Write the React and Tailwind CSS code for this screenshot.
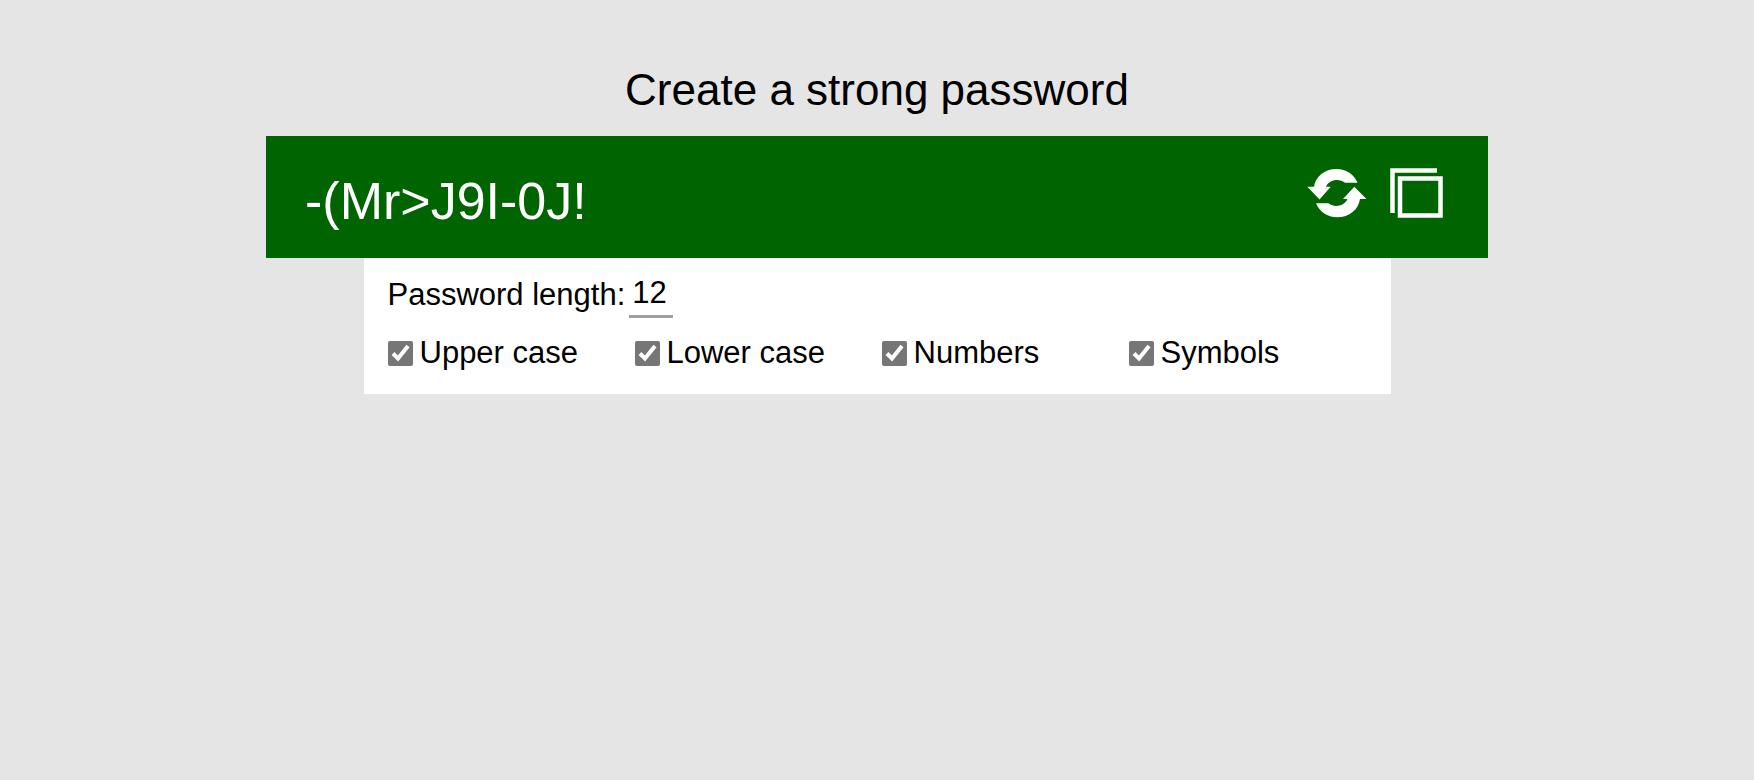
import { useState } from "react";

const OPTIONS = [
  { id: "upper", label: "Upper case" },
  { id: "lower", label: "Lower case" },
  { id: "numbers", label: "Numbers" },
  { id: "symbols", label: "Symbols" },
];

const SETS = {
  upper: "ABCDEFGHIJKLMNOPQRSTUVWXYZ",
  lower: "abcdefghijklmnopqrstuvwxyz",
  numbers: "0123456789",
  symbols: "!@#$%^&*()-_=+<>?",
};

function RefreshIcon() {
  return (
    <svg viewBox="0 0 60 50" className="h-[50px] w-[60px]" fill="currentColor" aria-hidden="true">
      <path d="M0.3 18.800H7C8.500 8.500 17.500 1 29.500 1C39.500 1 47 6.500 50.500 14.700H38C32 10 22 11.500 19 18.800H23.700L12.500 31.500Z" />
      <path d="M59.500 31H53C51.500 41.500 42.500 49.300 30 49.300C20.500 49.300 12.500 43.800 9 35.300H21.500C27.500 40 37 38.500 40.500 31H36L47.300 18.800Z" />
    </svg>
  );
}

function CopyIcon() {
  return (
    <svg viewBox="0 0 53 50" className="h-[50px] w-[53px]" fill="none" stroke="currentColor" aria-hidden="true">
      <path d="M2.500 45V2.500H47" strokeWidth="4.500" />
      <rect x="10" y="10.500" width="40.500" height="37" strokeWidth="4.500" />
    </svg>
  );
}

export default function App() {
  const [password, setPassword] = useState("-(Mr>J9I-0J!");
  const [length, setLength] = useState("12");
  const [enabled, setEnabled] = useState({ upper: true, lower: true, numbers: true, symbols: true });

  const generate = () => {
    const pool = OPTIONS.filter((o) => enabled[o.id]).map((o) => SETS[o.id]).join("");
    if (!pool) return;
    const size = Math.min(Number(length) || 12, 64);
    setPassword(Array.from({ length: size }, () => pool[Math.floor(Math.random() * pool.length)]).join(""));
  };

  return (
    <main className="flex min-h-screen flex-col items-center bg-[#e5e5e5] px-4 pt-16 font-['Liberation_Sans',Arial,sans-serif] text-black">
      <h1 className="mb-5 text-center text-[44px] leading-[52px]">Create a strong password</h1>

      <section className="flex min-h-[122px] w-full max-w-[1222px] items-start justify-between bg-[#006400] pr-[45px] pl-[39px] text-white">
        <output className="min-w-0 pt-[35px] text-[52px] leading-[60px] break-all">{password}</output>
        <div className="flex shrink-0 gap-[23px] pt-8">
          <button type="button" aria-label="Generate a new password" onClick={generate}>
            <RefreshIcon />
          </button>
          <button
            type="button"
            aria-label="Copy password"
            onClick={() => navigator.clipboard?.writeText(password)}
          >
            <CopyIcon />
          </button>
        </div>
      </section>

      <section className="w-full max-w-[1027px] bg-white pt-4 pr-[15px] pb-5 pl-6 text-[31px] leading-[42px]">
        <div className="flex items-start gap-1">
          <label htmlFor="length">Password length:</label>
          <input
            id="length"
            type="text"
            inputMode="numeric"
            value={length}
            onChange={(e) => setLength(e.target.value)}
            className="h-11 w-11 border-b-3 border-[#a0a0a0] bg-transparent pb-1 pl-[3px] text-[31px] outline-none"
          />
        </div>
        <div className="mt-3.5 grid grid-cols-2 md:grid-cols-4">
          {OPTIONS.map(({ id, label }) => (
            <label key={id} className="flex items-center gap-[7px] whitespace-nowrap">
              <input
                type="checkbox"
                checked={enabled[id]}
                onChange={(e) => setEnabled({ ...enabled, [id]: e.target.checked })}
                className="size-[25px] shrink-0 accent-[#767676]"
              />
              {label}
            </label>
          ))}
        </div>
      </section>
    </main>
  );
}
